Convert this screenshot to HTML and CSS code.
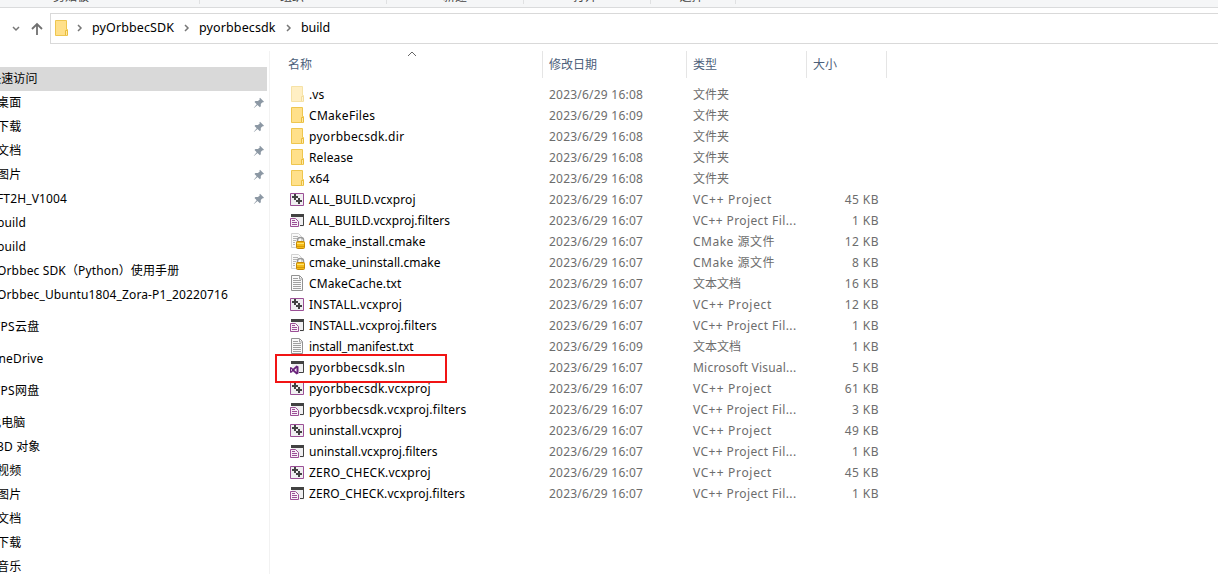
FILE: index.html
```html
<!DOCTYPE html>
<html lang="zh-CN">
<head>
<meta charset="utf-8">
<title>build</title>
<link rel="stylesheet" href="styles.css">
</head>
<body>
<svg class="defs" aria-hidden="true">
  <symbol id="folder" viewBox="0 0 16 16"><path d="M1.5.5h11v9h1v6h-12z" fill="#ffe08a" stroke="#eec64f"/><path d="M11.5 15V10.5h2V15" fill="#ffe9a6" stroke="#e9bd3d"/></symbol>
  <symbol id="vcx" viewBox="0 0 16 16"><path d="M.5 2.5h13v12H.5z" fill="#f0eff1" stroke="#9b4f96"/><path d="M5 3v6M2 6h6M9 7v6M6 10h6" stroke="#424242" stroke-width="2" fill="none"/></symbol>
  <symbol id="filters" viewBox="0 0 16 16"><path d="M2 4h12v10.5H2z" fill="#f0eff1"/><path d="M1 2h13v3H1z" fill="#424242"/><path d="M13.5 4v9.5H10" fill="none" stroke="#424242"/><path d="M.5 6.5h5l3 3v5h-8z" fill="#f7f0f7" stroke="#9b4f96"/><path d="M2 8.500h3M2 10.500h5M2 12.500h5" fill="none" stroke="#9b4f96"/></symbol>
  <symbol id="text" viewBox="0 0 16 16"><path d="M1.5.5h8l3 3v12h-11z" fill="#fafafa" stroke="#929292"/><path d="M9.5 1v3H12M3 3.5h5M3 5.5h8M3 7.5h8M3 9.5h8M3 11.5h8M3 13.5h8" fill="none" stroke="#a0a0a0"/></symbol>
  <symbol id="cmake" viewBox="0 0 16 16"><path d="M1.500.5h7l3 3v11h-10z" fill="#fafafa" stroke="#d2d2d2"/><path d="M3 3.500h5M3 5.500h4M3 7.500h3M3 9.500h2M3 11.500h2" stroke="#b5b5b5"/><path d="M7.500 10V7q0-2.500 3-2.500t3 2.500v3" fill="none" stroke="#999" stroke-width="1.500"/><rect x="6.500" y="8.500" width="8" height="7" rx="1" fill="#f4ba16" stroke="#c48806"/><path d="M7 10.500h7" stroke="#ffe36c"/><path d="M7 13.500h7" stroke="#d69b0a"/></symbol>
  <symbol id="sln" viewBox="0 0 16 16"><path d="M2 4h12v10H2z" fill="#f0eff1"/><path d="M1 2h13v3H1z" fill="#424242"/><path d="M13.500 4v9.500H9" fill="none" stroke="#424242"/><path d="M0 8.500L1 8l2 1.800L6.500 6.500l2 1v7l-2 1L3 12.200 1 14l-1-.500z" fill="#68217a"/><path d="M1 9.800v2.500L2.200 11zM6.500 9v4L4.300 11z" fill="#f6eff8"/></symbol>
  <symbol id="pin" viewBox="0 0 12 12"><path d="M7 .8L11 4.800 9.900 5.500 9.400 5.200 7.800 7v2.300l-.9.900L4.500 8 1 11 .8 10.800 3.700 7.300 1.500 5l.9-.9h2.500L6.800 2.500 6.400 1.700z" fill="#8c98a4"/></symbol>
  <symbol id="crumb" viewBox="0 0 8 8"><path d="M2 1l3 3-3 3" fill="none" stroke="#777" stroke-width="1.500"/></symbol>
</svg>
<div class="window">
  <div class="ribbon">
    <span class="group g1">剪贴板</span><span class="group g2">组织</span><span class="group g3">新建</span><span class="group g4">打开</span><span class="group g5">选择</span>
  </div>
  <div class="toolbar">
    <svg class="recent" viewBox="0 0 8 8"><path d="M1 2l3 3 3-3" fill="none" stroke="#777" stroke-width="1.500"/></svg>
    <svg class="up" viewBox="0 0 14 14"><path d="M7 13V2M2 7l5-5 5 5" fill="none" stroke="#707070" stroke-width="1.800"/></svg>
    <div class="address">
      <svg class="icon"><use href="#folder"/></svg>
      <svg class="crumb"><use href="#crumb"/></svg><span class="c1">pyOrbbecSDK</span>
      <svg class="crumb"><use href="#crumb"/></svg><span class="c2">pyorbbecsdk</span>
      <svg class="crumb"><use href="#crumb"/></svg><span class="c3">build</span>
    </div>
  </div>
  <div class="main">
    <nav class="sidebar">
      <div class="nav root selected">快速访问</div>
      <div class="nav">桌面<svg class="pin"><use href="#pin"/></svg></div>
      <div class="nav">下载<svg class="pin"><use href="#pin"/></svg></div>
      <div class="nav">文档<svg class="pin"><use href="#pin"/></svg></div>
      <div class="nav">图片<svg class="pin"><use href="#pin"/></svg></div>
      <div class="nav">FT2H_V1004<svg class="pin"><use href="#pin"/></svg></div>
      <div class="nav">build</div>
      <div class="nav">build</div>
      <div class="nav">Orbbec SDK（Python）使用手册</div>
      <div class="nav">Orbbec_Ubuntu1804_Zora-P1_20220716</div>
      <div class="nav root spaced cloud">WPS云盘</div>
      <div class="nav root spaced">OneDrive</div>
      <div class="nav root spaced cloud">WPS网盘</div>
      <div class="nav root spaced">此电脑</div>
      <div class="nav">3D 对象</div>
      <div class="nav">视频</div>
      <div class="nav">图片</div>
      <div class="nav">文档</div>
      <div class="nav">下载</div>
      <div class="nav">音乐</div>
    </nav>
    <section class="files">
      <div class="head"><span class="name-head">名称<svg class="sort" viewBox="0 0 10 6"><path d="M1 5l4-4 4 4" fill="none" stroke="#666"/></svg></span><span>修改日期</span><span>类型</span><span>大小</span></div>
      <div class="row"><svg class="icon faded"><use href="#folder"/></svg><b>.vs</b><time>2023/6/29 16:08</time><i>文件夹</i><em></em></div>
      <div class="row"><svg class="icon"><use href="#folder"/></svg><b class="wide">CMakeFiles</b><time>2023/6/29 16:09</time><i>文件夹</i><em></em></div>
      <div class="row"><svg class="icon"><use href="#folder"/></svg><b class="wide">pyorbbecsdk.dir</b><time>2023/6/29 16:08</time><i>文件夹</i><em></em></div>
      <div class="row"><svg class="icon"><use href="#folder"/></svg><b>Release</b><time>2023/6/29 16:08</time><i>文件夹</i><em></em></div>
      <div class="row"><svg class="icon"><use href="#folder"/></svg><b>x64</b><time>2023/6/29 16:08</time><i>文件夹</i><em></em></div>
      <div class="row"><svg class="icon"><use href="#vcx"/></svg><b>ALL_BUILD.vcxproj</b><time>2023/6/29 16:07</time><i class="project">VC++ Project</i><em>45 KB</em></div>
      <div class="row"><svg class="icon"><use href="#filters"/></svg><b class="tight">ALL_BUILD.vcxproj.filters</b><time>2023/6/29 16:07</time><i class="filter">VC++ Project Fil...</i><em>1 KB</em></div>
      <div class="row"><svg class="icon"><use href="#cmake"/></svg><b class="tight">cmake_install.cmake</b><time>2023/6/29 16:07</time><i class="source">CMake 源文件</i><em>12 KB</em></div>
      <div class="row"><svg class="icon"><use href="#cmake"/></svg><b class="tight">cmake_uninstall.cmake</b><time>2023/6/29 16:07</time><i class="source">CMake 源文件</i><em>8 KB</em></div>
      <div class="row"><svg class="icon"><use href="#text"/></svg><b>CMakeCache.txt</b><time>2023/6/29 16:07</time><i>文本文档</i><em>16 KB</em></div>
      <div class="row"><svg class="icon"><use href="#vcx"/></svg><b class="loose">INSTALL.vcxproj</b><time>2023/6/29 16:07</time><i class="project">VC++ Project</i><em>12 KB</em></div>
      <div class="row"><svg class="icon"><use href="#filters"/></svg><b>INSTALL.vcxproj.filters</b><time>2023/6/29 16:07</time><i class="filter">VC++ Project Fil...</i><em>1 KB</em></div>
      <div class="row"><svg class="icon"><use href="#text"/></svg><b class="tighter">install_manifest.txt</b><time>2023/6/29 16:09</time><i>文本文档</i><em>1 KB</em></div>
      <div class="row marked"><svg class="icon"><use href="#sln"/></svg><b class="wide">pyorbbecsdk.sln</b><time>2023/6/29 16:07</time><i class="studio">Microsoft Visual...</i><em>5 KB</em></div>
      <div class="row"><svg class="icon"><use href="#vcx"/></svg><b class="wide">pyorbbecsdk.vcxproj</b><time>2023/6/29 16:07</time><i class="project">VC++ Project</i><em>61 KB</em></div>
      <div class="row"><svg class="icon"><use href="#filters"/></svg><b class="loose">pyorbbecsdk.vcxproj.filters</b><time>2023/6/29 16:07</time><i class="filter">VC++ Project Fil...</i><em>3 KB</em></div>
      <div class="row"><svg class="icon"><use href="#vcx"/></svg><b class="tight">uninstall.vcxproj</b><time>2023/6/29 16:07</time><i class="project">VC++ Project</i><em>49 KB</em></div>
      <div class="row"><svg class="icon"><use href="#filters"/></svg><b class="tight">uninstall.vcxproj.filters</b><time>2023/6/29 16:07</time><i class="filter">VC++ Project Fil...</i><em>1 KB</em></div>
      <div class="row"><svg class="icon"><use href="#vcx"/></svg><b class="loose">ZERO_CHECK.vcxproj</b><time>2023/6/29 16:07</time><i class="project">VC++ Project</i><em>45 KB</em></div>
      <div class="row"><svg class="icon"><use href="#filters"/></svg><b>ZERO_CHECK.vcxproj.filters</b><time>2023/6/29 16:07</time><i class="filter">VC++ Project Fil...</i><em>1 KB</em></div>
    </section>
  </div>
</div>
</body>
</html>
```
FILE: styles.css
```css
*, *::after { box-sizing: border-box; }
body { margin: 0; background: #fff; color: #000; font: 12px/21px "Noto Sans", "Noto Sans CJK SC", sans-serif; }
svg { display: block; flex: none; }
.defs { position: absolute; width: 0; height: 0; }
.window { width: 1218px; height: 574px; overflow: hidden; display: flex; flex-direction: column; }
.ribbon { height: 8px; flex: none; display: flex; align-items: flex-start; background: #f5f6f7; border-bottom: 1px solid #dadbdc; overflow: hidden; color: #444; }
.group { height: 4px; line-height: 15px; border-right: 1px solid #e0e1e2; display: flex; align-items: flex-end; justify-content: center; }
.g1 { width: 200px; padding-right: 57px; }
.g2 { width: 187px; padding-right: 2px; }
.g3 { width: 137px; }
.g4 { width: 127px; padding-right: 4px; }
.g5 { width: 85px; padding-right: 3px; }
.toolbar { height: 43px; flex: none; display: flex; padding-top: 5px; }
.recent { width: 8px; height: 8px; margin: 12px 10px 0 12px; }
.up { width: 14px; height: 14px; margin: 9px 6px 0 0; }
.address { flex: 1; height: 31px; border: 1px solid #d9d9d9; border-right: 0; display: flex; align-items: center; padding-left: 3px; font-size: 12.500px; }
.address .icon { width: 16px; height: 16px; margin-top: -1px; }
.crumb { width: 8px; height: 8px; margin-top: -1px; }
.address .icon + .crumb { margin-left: 6px; }
.address span { margin: 0 0 2px 8px; white-space: nowrap; letter-spacing: .12px; }
.address .c1 { width: 91px; }
.address .c2 { width: 86px; }
.address .c3 { letter-spacing: -.1px; }
.main { flex: 1; min-height: 0; display: flex; }
.sidebar { width: 270px; flex: none; border-right: 1px solid #f2f2f2; padding-top: 16px; overflow: hidden; }
.nav { height: 24px; line-height: 22px; width: 267px; display: flex; justify-content: space-between; align-items: center; text-indent: -3px; white-space: nowrap; overflow: hidden; letter-spacing: .14px; }
.root { text-indent: -11px; }
.cloud { letter-spacing: .3px; }
.selected { background: #d9d9d9; }
.spaced { margin-top: 8px; }
.pin { width: 12px; height: 12px; margin-right: 2px; }
.files { width: 617px; flex: none; }
.head { display: grid; grid-template-columns: 273px 144px 120px 80px; height: 27px; line-height: 28px; color: #4c607a; margin-bottom: 6px; }
.head span { height: 27px; border-right: 1px solid #e5e5e5; padding-left: 6px; }
.head .name-head { padding-left: 18px; display: flex; }
.sort { width: 10px; height: 6px; margin: 0 0 0 95px; }
.row { height: 21px; display: grid; grid-template-columns: 19px 240px 144px 120px 66px; padding-left: 20px; align-items: center; position: relative; white-space: nowrap; color: #6d6d6d; }
.row b, .row i, .row em { font-weight: 400; font-style: normal; }
.row b { color: #000; letter-spacing: .12px; }
.row .wide { letter-spacing: .3px; }
.row .loose { letter-spacing: .22px; }
.row .tight { letter-spacing: .04px; }
.row .tighter { letter-spacing: -.1px; }
.row time { letter-spacing: .22px; }
.row .project { letter-spacing: .7px; }
.row .filter { letter-spacing: .4px; }
.row .studio { letter-spacing: .22px; }
.row .source { letter-spacing: .5px; }
.row em { text-align: right; letter-spacing: .45px; }
.icon { width: 16px; height: 16px; }
.row .icon { align-self: start; margin-top: 2px; }
.faded { opacity: .5; }
.marked::after { content: ""; position: absolute; left: 5px; top: -3px; width: 172px; height: 29px; border: 2px solid #f11414; outline: 0; z-index: 1; }
```
